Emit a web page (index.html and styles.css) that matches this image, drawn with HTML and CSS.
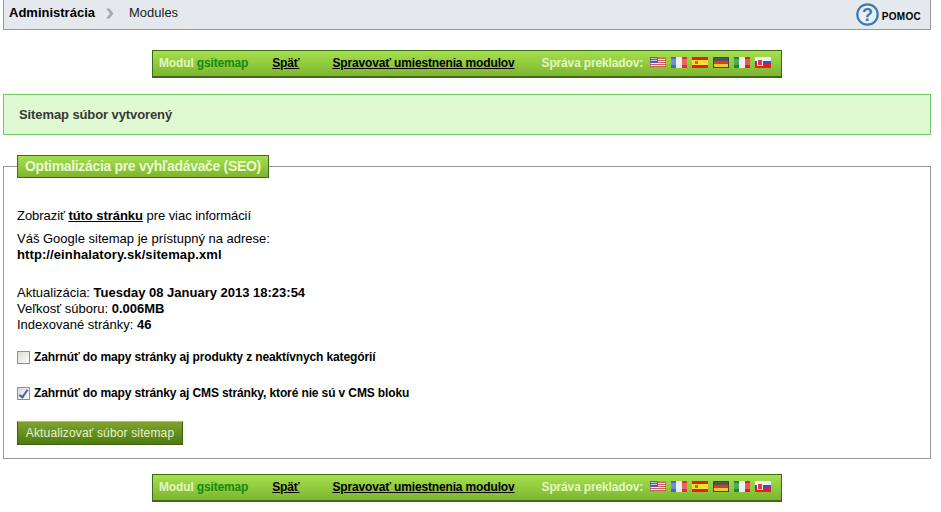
FILE: index.html
```html
<!DOCTYPE html>
<html lang="en">
<head>
    <meta charset="UTF-8">
    <title>Modules</title>
    <link rel="stylesheet" href="styles.css">
</head>
<body>
    <svg class="sprites" width="0" height="0">
        <symbol id="flag-us" viewBox="0 0 16 11"><rect width="16" height="11" fill="#f3eeee"/><path d="M0 1.5h16M0 3.5h16M0 5.5h16M0 7.5h16M0 9.5h16" stroke="#c9605f"/><rect width="8" height="6" fill="#4a5da8"/><rect x="1" y="1" width="6" height="1" fill="#c5cbe6"/><rect x="1" y="3" width="6" height="1" fill="#c5cbe6"/><rect x=".5" y=".5" width="15" height="10" fill="none" stroke="#7c5f78" stroke-opacity=".6"/></symbol>
        <symbol id="flag-fr" viewBox="0 0 16 11"><rect width="16" height="11" fill="#e6eaf4"/><rect width="5" height="11" fill="#4468c8"/><rect x="11" width="5" height="11" fill="#e23030"/><rect y="2" width="16" height="6" fill="#fff" opacity=".25"/></symbol>
        <symbol id="flag-es" viewBox="0 0 16 11"><rect width="16" height="11" fill="#e81c12"/><rect y="3" width="16" height="5" fill="#f6e02c"/><rect x="3" y="4" width="3" height="3" fill="#d0602a"/></symbol>
        <symbol id="flag-de" viewBox="0 0 16 11"><rect width="16" height="11" fill="#e23a1a"/><rect width="16" height="4" fill="#555"/><rect y="7" width="16" height="4" fill="#ecc832"/><rect x=".5" y=".5" width="15" height="10" fill="none" stroke="#444"/></symbol>
        <symbol id="flag-it" viewBox="0 0 16 11"><rect width="16" height="11" fill="#eaf0ea"/><rect width="5" height="11" fill="#1c8a2c"/><rect x="11" width="5" height="11" fill="#e81c24"/><rect y="2" width="16" height="6" fill="#fff" opacity=".25"/></symbol>
        <symbol id="flag-sk" viewBox="0 0 16 11"><rect width="16" height="11" fill="#f2f2f6"/><rect y="4" width="16" height="3" fill="#2c54d0"/><rect y="7" width="16" height="4" fill="#e81c24"/><rect x="2.5" y="2.5" width="5" height="6" fill="#e23a3a" stroke="#f5f5f5"/></symbol>
    </svg>

    <div class="header">
        <div class="crumbs">
            <b>Administrácia</b>
            <svg class="crumb-arrow" width="10" height="11" viewBox="0 0 10 11"><path d="M1 0.5 L4.5 0.5 L8.5 5.5 L4.5 10.5 L1 10.5 L5 5.5 Z" fill="#a9a9a9"/></svg>
            <span>Modules</span>
        </div>
        <div class="help">
            <svg width="23" height="23" viewBox="0 0 23 23"><circle cx="11.5" cy="11.5" r="10.2" fill="#e8f0f6" stroke="#3f79ad" stroke-width="2.2"/><text x="11.5" y="17.5" text-anchor="middle" class="help-mark">?</text></svg>
            <b>POMOC</b>
        </div>
    </div>

    <div class="toolbar">
        <span class="tb-module">Modul <em>gsitemap</em></span>
        <a class="tb-back" href="#">Späť</a>
        <a class="tb-hooks" href="#">Spravovať umiestnenia modulov</a>
        <span class="tb-trans">Správa prekladov:</span>
        <div class="flags">
            <svg class="flag"><use href="#flag-us"/></svg>
            <svg class="flag"><use href="#flag-fr"/></svg>
            <svg class="flag"><use href="#flag-es"/></svg>
            <svg class="flag"><use href="#flag-de"/></svg>
            <svg class="flag"><use href="#flag-it"/></svg>
            <svg class="flag"><use href="#flag-sk"/></svg>
        </div>
    </div>

    <div class="conf">Sitemap súbor vytvorený</div>

    <fieldset class="panel">
        <legend>Optimalizácia pre vyhľadávače (SEO)</legend>
        <p class="see">Zobraziť <a href="#">túto stránku</a> pre viac informácií</p>
        <p class="url">Váš Google sitemap je prístupný na adrese:<br><b>http://einhalatory.sk/sitemap.xml</b></p>
        <p class="stats">Aktualizácia: <b>Tuesday 08 January 2013 18:23:54</b><br>Veľkosť súboru: <b>0.006MB</b><br>Indexované stránky: <b>46</b></p>
        <label class="opt opt-first"><input type="checkbox"> Zahrnúť do mapy stránky aj produkty z neaktívnych kategórií</label>
        <label class="opt"><input type="checkbox" checked> Zahrnúť do mapy stránky aj CMS stránky, ktoré nie sú v CMS bloku</label>
        <button class="btn" type="button">Aktualizovať súbor sitemap</button>
    </fieldset>

    <div class="toolbar toolbar-bottom">
        <span class="tb-module">Modul <em>gsitemap</em></span>
        <a class="tb-back" href="#">Späť</a>
        <a class="tb-hooks" href="#">Spravovať umiestnenia modulov</a>
        <span class="tb-trans">Správa prekladov:</span>
        <div class="flags">
            <svg class="flag"><use href="#flag-us"/></svg>
            <svg class="flag"><use href="#flag-fr"/></svg>
            <svg class="flag"><use href="#flag-es"/></svg>
            <svg class="flag"><use href="#flag-de"/></svg>
            <svg class="flag"><use href="#flag-it"/></svg>
            <svg class="flag"><use href="#flag-sk"/></svg>
        </div>
    </div>
</body>
</html>
```

FILE: styles.css
```css
body {
    font-family: "Liberation Sans", Arial, sans-serif;
    font-size: 13px;
    color: #000;
    background-color: #fff;
    margin: 0;
    width: 928px;
    padding-left: 3px;
}
.sprites {
    position: absolute;
}
.header {
    display: flex;
    justify-content: space-between;
    height: 29px;
    background-color: #e3e9ed;
    border: 1px solid #999;
    border-top: none;
    width: 926px;
}
.crumbs {
    display: flex;
    align-items: center;
    height: 25px;
    padding-left: 5px;
    color: #222;
}
.crumbs b {
    color: #000;
}
.crumb-arrow {
    margin: 2px 14px 0 10px;
}
.help {
    display: flex;
    align-items: center;
    gap: 3px;
    font-size: 10px;
    letter-spacing: 0.3px;
    padding-right: 9px;
}
.help b {
    margin-top: 3px;
}
.help-mark {
    font-family: "Liberation Sans", Arial, sans-serif;
    font-size: 18px;
    font-weight: bold;
    fill: #3f79ad;
    letter-spacing: 0;
}
.toolbar {
    display: flex;
    align-items: center;
    box-sizing: border-box;
    width: 630px;
    height: 28px;
    margin: 20px 0 16px 149px;
    padding: 0 0 2px 6px;
    font-size: 12px;
    font-weight: bold;
    letter-spacing: -0.15px;
    border: 1px solid #3d6b1a;
    border-bottom-width: 2px;
    background: linear-gradient(#a5e04e, #7db52f);
    color: #e4f7c4;
}
.toolbar-bottom {
    margin-top: 15px;
    margin-bottom: 0;
}
.tb-module em {
    font-style: normal;
    color: #128a12;
}
.toolbar a {
    color: #000;
}
.tb-back {
    margin-left: 24px;
}
.tb-hooks {
    margin-left: 33px;
}
.tb-trans {
    margin-left: 27px;
}
.flags {
    display: flex;
    gap: 5px;
    margin-left: 7px;
}
.flag {
    width: 16px;
    height: 11px;
    display: block;
}
.conf {
    box-sizing: border-box;
    height: 41px;
    line-height: 40px;
    padding-left: 15px;
    background-color: #dffad3;
    border: 1px solid #72cb67;
    color: #383838;
    font-weight: bold;
    letter-spacing: -0.1px;
}
.panel {
    box-sizing: border-box;
    width: 928px;
    height: 304px;
    margin: 20px 0 0;
    padding: 30px 13px 0;
    border: 1px solid #999;
    min-width: 0;
}
.panel legend {
    box-sizing: border-box;
    height: 23px;
    line-height: 21px;
    padding: 0 7px;
    font-size: 14px;
    font-weight: bold;
    letter-spacing: -0.33px;
    color: #e9f9d0;
    border: 1px solid #3d6b1a;
    background: linear-gradient(#a5e04e, #7db52f);
}
.panel p {
    margin: 0;
    line-height: 16px;
}
.see {
    letter-spacing: -0.05px;
}
.see a {
    color: #000;
    font-weight: bold;
}
.url {
    padding-top: 7px;
}
.url b {
    letter-spacing: 0.1px;
}
.stats {
    padding-top: 22px;
}
.opt {
    display: flex;
    align-items: center;
    gap: 4px;
    font-size: 12px;
    font-weight: bold;
    letter-spacing: -0.12px;
    height: 14px;
}
.opt input {
    appearance: none;
    box-sizing: border-box;
    position: relative;
    margin: 0;
    width: 13px;
    height: 13px;
    border: 1px solid #8e8f8f;
    background: linear-gradient(135deg, #dcdcd7, #fbfbf9);
}
.opt input:checked::after {
    content: "";
    position: absolute;
    left: 3px;
    top: 0;
    width: 3px;
    height: 8px;
    border: solid #4a5aa8;
    border-width: 0 2px 2px 0;
    transform: rotate(35deg);
}
.opt-first {
    margin-top: 17px;
    margin-bottom: 22px;
}
.btn {
    display: block;
    box-sizing: border-box;
    width: 166px;
    height: 24px;
    margin-top: 21px;
    padding: 0;
    font-family: inherit;
    font-size: 12px;
    letter-spacing: 0.15px;
    color: #e6f2d0;
    border: 1px solid #3d5f12;
    border-top-color: #a4c476;
    background: linear-gradient(#7ea32f, #507a10);
}
```
